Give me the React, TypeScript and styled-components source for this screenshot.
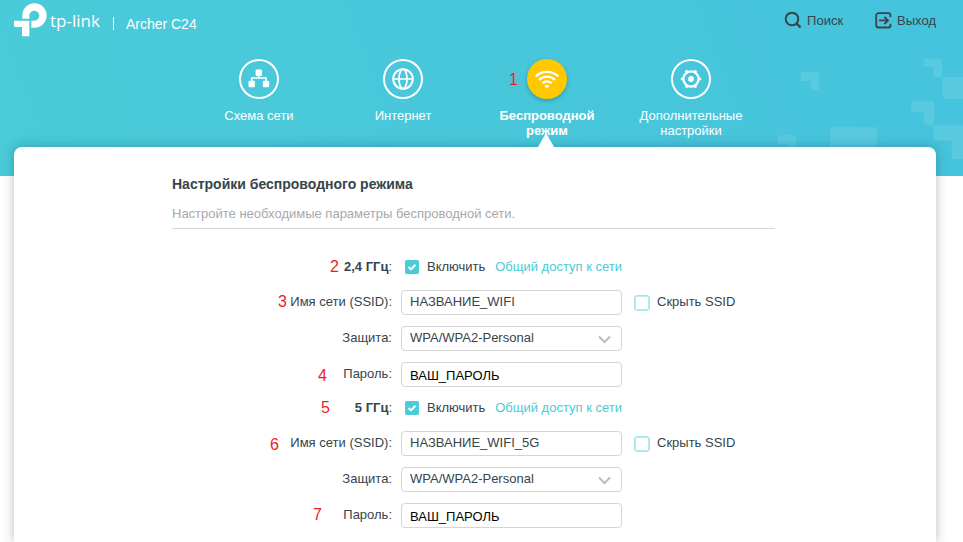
import React, { useId, useState } from "react";
import styled, { createGlobalStyle, css } from "styled-components";

const ink = "#36444b";
const teal = "#4acbd6";
const line = "#d5d5d5";

const GlobalStyle = createGlobalStyle`
  *, *::before, *::after { box-sizing: border-box; }
  body {
    margin: 0;
    background: #fff;
    color: ${ink};
    font: 13px/15px "Liberation Sans", Arial, sans-serif;
  }
  button, input, select { font: inherit; color: inherit; margin: 0; }
`;

const Page = styled.div`
  position: relative;
  min-height: 100vh;
  padding: 0 27px 0 14px;
  display: flex;
  flex-direction: column;
  overflow: hidden;
`;

const Backdrop = styled.div`
  position: absolute;
  top: 0;
  left: 0;
  right: 0;
  height: 176px;
  background: linear-gradient(70deg, #4acbd8, #46c3dd);
`;

const Blocks = styled.svg`
  position: absolute;
  right: 0;
  bottom: 0;
  width: 203px;
  height: 136px;
  fill: #fff;
  fill-opacity: 0.1;
`;

const TopBar = styled.header`
  position: relative;
  display: flex;
  justify-content: space-between;
  align-items: center;
  height: 40px;
`;

const Brand = styled.div`
  display: flex;
  align-items: center;
  color: #fff;
`;

const Wordmark = styled.span`
  margin-left: 3px;
  padding-top: 2px;
  font: 17px/24px "Open Sans", sans-serif;
`;

const Model = styled.span`
  margin-left: 13px;
  padding: 7px 0 0 13px;
  font-size: 14px;
  line-height: 16px;
  background: linear-gradient(#fff, #fff) left 0 bottom 2px / 1px 13px no-repeat;
`;

const Actions = styled.div`
  display: flex;
  gap: 32px;
`;

const Action = styled.button`
  display: flex;
  align-items: center;
  gap: 5px;
  padding: 0;
  border: 0;
  background: none;
  cursor: pointer;
`;

const Tabs = styled.nav`
  position: relative;
  z-index: 1;
  display: flex;
  justify-content: center;
  height: 107px;
  padding-top: 19px;
`;

const Tab = styled.button<{ $active?: boolean }>`
  position: relative;
  display: flex;
  flex-direction: column;
  align-items: center;
  gap: 9px;
  width: 144px;
  padding: 0 20px;
  border: 0;
  background: none;
  color: #fff;
  cursor: pointer;
  font-weight: ${(p) => (p.$active ? 700 : 400)};
  ${(p) =>
    p.$active &&
    css`
      &::after {
        content: "";
        position: absolute;
        bottom: 0;
        left: 50%;
        margin-left: -9px;
        border: 8px solid transparent;
        border-top: 0;
        border-bottom: 14px solid #fff;
      }
    `}
`;

const TabIcon = styled.span<{ $active?: boolean }>`
  display: flex;
  flex: none;
  width: 40px;
  height: 40px;
  border-radius: 50%;
  ${(p) =>
    p.$active
      ? css`
          background: #ffc800;
          box-shadow: 0 2px 4px rgba(0, 60, 80, 0.3);
        `
      : css`
          box-shadow: inset 0 0 0 2px #fff;
        `}
`;

const Card = styled.main`
  position: relative;
  flex: 1;
  padding-top: 29px;
  border-radius: 8px 8px 0 0;
  background: #fff;
  box-shadow: 0 0 12px rgba(0, 40, 60, 0.3);
`;

const Section = styled.section`
  max-width: 606px;
  margin: 0 auto;
  padding-right: 3px;
`;

const Title = styled.h1`
  margin: 0;
  font-size: 14px;
  line-height: 16px;
`;

const Intro = styled.p`
  margin: 0 0 26px;
  padding: 14px 0 7px;
  border-bottom: 1px solid ${line};
  color: #a6a9ac;
`;

const Band = styled.div`
  display: flex;
  flex-direction: column;
  gap: 11px;
  margin-bottom: 9px;
`;

const Row = styled.div<{ $head?: boolean }>`
  position: relative;
  display: grid;
  grid-template-columns: 220px 221px auto;
  column-gap: 9px;
  align-items: center;
  height: ${(p) => (p.$head ? 24 : 25)}px;
`;

const RowLabel = styled.label`
  text-align: right;
  padding-bottom: 2px;
`;

const Marker = styled.span<{ $x: number; $y?: number }>`
  position: absolute;
  left: ${(p) => p.$x}px;
  top: ${(p) => p.$y ?? 3}px;
  font-size: 16px;
  font-weight: 400;
  line-height: 18px;
  color: #ed1c24;
`;

const field = css`
  width: 100%;
  height: 25px;
  padding: 0 8px 2px;
  border: 1px solid ${line};
  border-radius: 4px;
  background: #fff;
  outline: 0;
  appearance: none;
`;

const TextBox = styled.input<{ $strong?: boolean }>`
  ${field}
  ${(p) => p.$strong && "color: #000; padding: 2px 8px 0;"}
`;

const SelectWrap = styled.div`
  position: relative;
  svg {
    position: absolute;
    right: 11px;
    top: 9px;
    pointer-events: none;
  }
`;

const SelectBox = styled.select`
  ${field}
  display: block;
`;

const EnableCell = styled.div`
  display: flex;
  align-items: center;
  justify-content: space-between;
  padding-left: 3px;
  white-space: nowrap;
`;

const CheckLabel = styled.label`
  display: flex;
  align-items: center;
  gap: 7px;
  white-space: nowrap;
`;

const CheckText = styled.span`
  padding-bottom: 2px;
`;

const HideCell = styled.div`
  padding-left: 3px;
`;

const Check = styled.input`
  appearance: none;
  flex: none;
  width: 16px;
  height: 16px;
  border: 1px solid #a4e5ea;
  border-radius: 3px;
  background: #fff center / 14px 14px no-repeat;
  box-shadow: inset 0 0 0 1px #b9ebef;
  &:checked {
    border-color: #fff;
    box-shadow: none;
    background-color: ${teal};
    background-image: url("data:image/svg+xml,%3Csvg xmlns='http://www.w3.org/2000/svg' viewBox='0 0 14 14'%3E%3Cpath d='M3.5 7l2.4 2.4 4.6-4.6' fill='none' stroke='white' stroke-width='2'/%3E%3C/svg%3E");
  }
`;

const ShareLink = styled.a`
  color: ${teal};
  text-decoration: none;
  padding-bottom: 2px;
`;

const LogoMark = () => (
  <svg width="33" height="34" viewBox="42 8 99 102" fill="#fff" aria-hidden="true">
    <path d="M67 55V45A36.5 36.5 0 1 1 103 82H94V61H103A15 15 0 1 0 88 45V55Z" />
    <path d="M42 61H88V108H66V80H46Q42 80 42 76Z" />
  </svg>
);

const SearchIcon = () => (
  <svg width="18" height="18" viewBox="0 0 18 18" fill="none" stroke={ink} strokeWidth="2" aria-hidden="true">
    <circle cx="8" cy="8" r="6.3" />
    <path d="M12.5 12.5L16.5 16.5" strokeWidth="2.4" />
  </svg>
);

const ExitIcon = () => (
  <svg width="17" height="17" viewBox="0 0 17 17" fill="none" stroke={ink} strokeWidth="1.8" aria-hidden="true">
    <path d="M15.5 5V3.5A2.3 2.3 0 0 0 13.2 1.2H3.5A2.3 2.3 0 0 0 1.2 3.5V13.2A2.3 2.3 0 0 0 3.5 15.5H13.2A2.3 2.3 0 0 0 15.5 13.2V11.8" />
    <path d="M4 8.4H13M9.4 4.8L13 8.4L9.4 12" />
  </svg>
);

const MapIcon = () => (
  <svg width="40" height="40" viewBox="0 0 40 40" fill="#fff" aria-hidden="true">
    <rect x="16.6" y="10.5" width="6.4" height="6.5" rx="1" />
    <rect x="9.5" y="21.8" width="6.4" height="6.5" rx="1" />
    <rect x="23.8" y="21.8" width="6.4" height="6.5" rx="1" />
    <path d="M19.8 16V19M12.7 22V19H27V22" fill="none" stroke="#fff" strokeWidth="1.6" />
  </svg>
);

const GlobeIcon = () => (
  <svg width="40" height="40" viewBox="0 0 40 40" fill="none" stroke="#fff" strokeWidth="1.6" aria-hidden="true">
    <circle cx="20" cy="20" r="9.8" strokeWidth="2" />
    <ellipse cx="20" cy="20" rx="4" ry="9.8" strokeWidth="1.8" />
    <path d="M10 20H30" />
  </svg>
);

const WifiIcon = () => (
  <svg width="40" height="40" viewBox="0 0 40 40" fill="none" stroke="#fff" strokeWidth="2.3" aria-hidden="true">
    <path d="M8.6 17.4A16.5 16.5 0 0 1 31.4 17.4" />
    <path d="M12 20.9A11.6 11.6 0 0 1 28 20.9" />
    <path d="M15.4 24.3A6.6 6.6 0 0 1 24.6 24.3" />
    <path d="M17.4 26.7Q20 24.8 22.6 26.7L20 29.4Z" fill="#fff" stroke="none" />
  </svg>
);

const GearIcon = () => (
  <svg width="40" height="40" viewBox="0 0 40 40" fill="none" stroke="#fff" aria-hidden="true">
    <circle cx="20" cy="20" r="7.6" strokeWidth="2.2" />
    <path
      d="M27.8 20H30.2M24 13.1L25 11.3M16 13.1L15 11.3M12.2 20H9.8M16 26.9L15 28.7M24 26.9L25 28.7"
      strokeWidth="2.6"
    />
    <circle cx="20" cy="20" r="2.9" fill="#fff" stroke="none" />
  </svg>
);

const Chevron = () => (
  <svg width="13" height="9" viewBox="0 0 13 9" fill="none" stroke="#bcbcbc" strokeWidth="2" aria-hidden="true">
    <path d="M1 1.5L6.5 7L12 1.5" />
  </svg>
);

const tabs = [
  { label: "Схема сети", Icon: MapIcon },
  { label: "Интернет", Icon: GlobeIcon },
  { label: "Беспроводной режим", Icon: WifiIcon, marker: "1" },
  { label: "Дополнительные настройки", Icon: GearIcon },
];

type Mark = { n: string; x: number; y?: number };

type BandProps = {
  name: string;
  ssid: string;
  marks: { band: Mark; ssid: Mark; password: Mark };
};

const Note = ({ n, x, y }: Mark) => (
  <Marker $x={x} $y={y}>
    {n}
  </Marker>
);

function BandSettings({ name, ssid, marks }: BandProps) {
  const id = useId();
  const [enabled, setEnabled] = useState(true);
  const [hidden, setHidden] = useState(false);
  return (
    <Band>
      <Row $head>
        <Note {...marks.band} />
        <RowLabel htmlFor={id + "on"}>
          <b>{name}</b>:
        </RowLabel>
        <EnableCell>
          <CheckLabel>
            <Check id={id + "on"} type="checkbox" checked={enabled} onChange={() => setEnabled(!enabled)} />
            <CheckText>Включить</CheckText>
          </CheckLabel>
          <ShareLink href="#sharing">Общий доступ к сети</ShareLink>
        </EnableCell>
      </Row>
      <Row>
        <Note {...marks.ssid} />
        <RowLabel htmlFor={id + "ssid"}>Имя сети (SSID):</RowLabel>
        <TextBox id={id + "ssid"} defaultValue={ssid} />
        <HideCell>
          <CheckLabel>
            <Check type="checkbox" checked={hidden} onChange={() => setHidden(!hidden)} />
            <CheckText>Скрыть SSID</CheckText>
          </CheckLabel>
        </HideCell>
      </Row>
      <Row>
        <RowLabel htmlFor={id + "sec"}>Защита:</RowLabel>
        <SelectWrap>
          <SelectBox id={id + "sec"}>
            <option>WPA/WPA2-Personal</option>
          </SelectBox>
          <Chevron />
        </SelectWrap>
      </Row>
      <Row>
        <Note {...marks.password} />
        <RowLabel htmlFor={id + "pw"}>Пароль:</RowLabel>
        <TextBox id={id + "pw"} $strong defaultValue="ВАШ_ПАРОЛЬ" />
      </Row>
    </Band>
  );
}

export default function App() {
  return (
    <Page>
      <GlobalStyle />
      <Backdrop>
        <Blocks viewBox="0 0 609 408" aria-hidden="true">
          <path d="M123 96H177V151H153V123H123Z" />
          <path d="M491 56H546V111H521V81H491Z" />
          <path d="M547 111H609V177H559Q547 177 547 165Z" />
          <path d="M453 184H522V254H491V215H453Z" />
          <path d="M521 256H609V357H575V302H521Z" />
          <path d="M210 262H351V340H210Z" />
          <path d="M54 286H108V340H82V312H54Z" />
        </Blocks>
      </Backdrop>
      <TopBar>
        <Brand>
          <LogoMark />
          <Wordmark>tp-link</Wordmark>
          <Model>Archer C24</Model>
        </Brand>
        <Actions>
          <Action type="button">
            <SearchIcon />
            Поиск
          </Action>
          <Action type="button">
            <ExitIcon />
            Выход
          </Action>
        </Actions>
      </TopBar>
      <Tabs>
        {tabs.map(({ label, Icon, marker }) => (
          <Tab key={label} type="button" $active={!!marker}>
            {marker && <Note n={marker} x={34} y={12} />}
            <TabIcon $active={!!marker}>
              <Icon />
            </TabIcon>
            {label}
          </Tab>
        ))}
      </Tabs>
      <Card>
        <Section>
          <Title>Настройки беспроводного режима</Title>
          <Intro>Настройте необходимые параметры беспроводной сети.</Intro>
          <BandSettings
            name="2,4 ГГц"
            ssid="НАЗВАНИЕ_WIFI"
            marks={{ band: { n: "2", x: 158 }, ssid: { n: "3", x: 106 }, password: { n: "4", x: 146, y: 5 } }}
          />
          <BandSettings
            name="5 ГГц"
            ssid="НАЗВАНИЕ_WIFI_5G"
            marks={{ band: { n: "5", x: 149 }, ssid: { n: "6", x: 98, y: 5 }, password: { n: "7", x: 141 } }}
          />
        </Section>
      </Card>
    </Page>
  );
}
